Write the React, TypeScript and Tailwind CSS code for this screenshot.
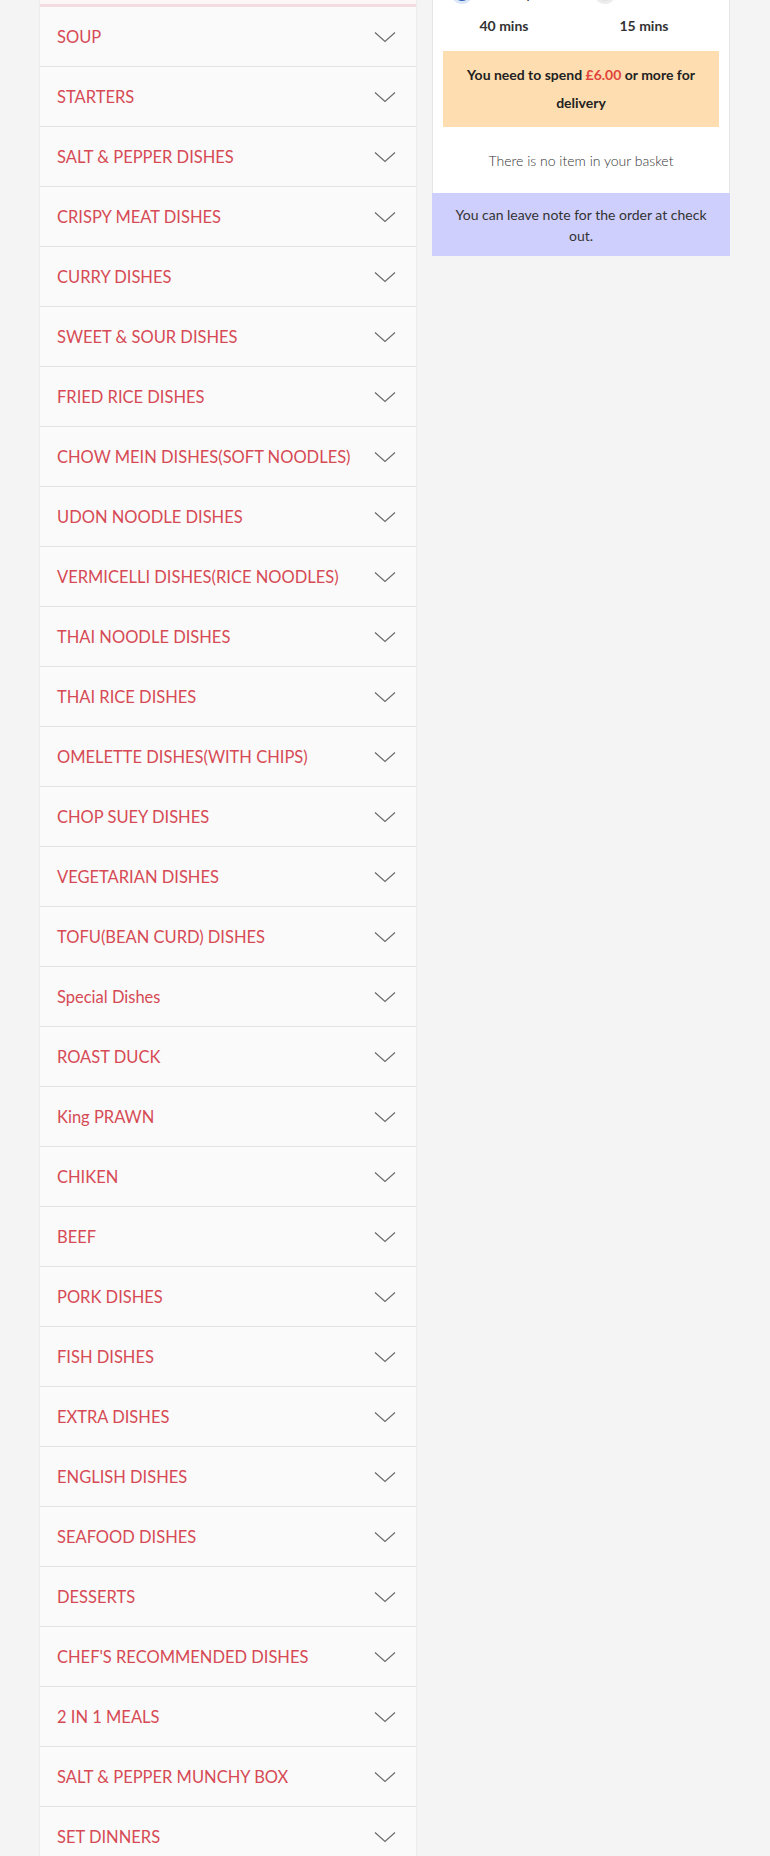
import React from 'react'

const categories = [
  'SOUP',
  'STARTERS',
  'SALT & PEPPER DISHES',
  'CRISPY MEAT DISHES',
  'CURRY DISHES',
  'SWEET & SOUR DISHES',
  'FRIED RICE DISHES',
  'CHOW MEIN DISHES(SOFT NOODLES)',
  'UDON NOODLE DISHES',
  'VERMICELLI DISHES(RICE NOODLES)',
  'THAI NOODLE DISHES',
  'THAI RICE DISHES',
  'OMELETTE DISHES(WITH CHIPS)',
  'CHOP SUEY DISHES',
  'VEGETARIAN DISHES',
  'TOFU(BEAN CURD) DISHES',
  'Special Dishes',
  'ROAST DUCK',
  'King PRAWN',
  'CHIKEN',
  'BEEF',
  'PORK DISHES',
  'FISH DISHES',
  'EXTRA DISHES',
  'ENGLISH DISHES',
  'SEAFOOD DISHES',
  'DESSERTS',
  "CHEF'S RECOMMENDED DISHES",
  '2 IN 1 MEALS',
  'SALT & PEPPER MUNCHY BOX',
  'SET DINNERS',
]

const Chevron = () => (
  <svg width="22" height="12" viewBox="0 0 22 12" fill="none">
    <polyline points="1,1.5 11,10.5 21,1.5" stroke="#6b6b6b" strokeWidth="1.2" />
  </svg>
)

const CategoryRow: React.FC<{ name: string }> = ({ name }) => (
  <div className="h-[60px] flex items-center justify-between pl-[17px] pr-[20px] bg-[#fafafa] border-b border-[#e3e3e3] cursor-pointer">
    <span className="pt-[2px] text-[16.5px] text-[#d64a55] leading-none">{name}</span>
    <Chevron />
  </div>
)

const App: React.FC = () => {
  return (
    <div
      className="h-[1856px] overflow-hidden bg-[#f4f4f4] flex items-start gap-[16px] px-[40px]"
      style={{ fontFamily: 'Lato, "Noto Sans", sans-serif' }}
    >
      {/* menu categories */}
      <div className="w-[376px] shrink-0 shadow-[0_0_2px_rgba(0,0,0,0.1)]">
        <div className="h-[7px] bg-[#fdf6f7] border-b-[3px] border-[#f3dce1]" />
        {categories.map(cat => (
          <CategoryRow key={cat} name={cat} />
        ))}
      </div>

      {/* basket */}
      <div className="w-[298px] shrink-0 -mt-[16px]">
        <div className="bg-white border-x border-t border-[#e6e6e6] pb-[22px]">
          <div className="ml-[1px] w-[280px] grid grid-cols-2">
            <div>
              <div className="h-[20px] flex items-start gap-[8px] pl-[20px]">
                <span className="w-[16px] h-[16px] shrink-0 rounded-full bg-[#2f5fb3] ring-[3px] ring-[#dbe6f7]" />
                <span className="text-[15px] leading-[14px] text-[#333]">Delivery</span>
              </div>
              <div className="mt-[11px] h-[20px] leading-[20px] text-center text-[14px] font-bold text-[#333]">
                40 mins
              </div>
            </div>
            <div>
              <div className="h-[20px] flex items-start gap-[8px] pl-[23px]">
                <span className="w-[16px] h-[16px] shrink-0 rounded-full bg-[#e4e4e4] ring-[3px] ring-[#ececec]" />
                <span className="text-[15px] leading-[14px] text-[#333]">Collection</span>
              </div>
              <div className="mt-[11px] h-[20px] leading-[20px] text-center text-[14px] font-bold text-[#333]">
                15 mins
              </div>
            </div>
          </div>

          <div className="mx-[10px] mt-[15px] bg-[#fedeb0] py-[10px] px-[18px] text-center text-[14px] leading-[28px] font-bold text-[#222]">
            You need to spend <span className="text-[#e0443c]">£6.00</span> or more for delivery
          </div>

          <p className="mt-[24px] h-[20px] leading-[20px] text-center text-[14px] font-light text-[#333]">
            There is no item in your basket
          </p>
        </div>
        <div className="bg-[#cfcffd] pt-[11px] pb-[10px] px-[22px] text-center text-[14px] leading-[21px] text-[#333]">
          You can leave note for the order at check out.
        </div>
      </div>
    </div>
  )
}

export default App
